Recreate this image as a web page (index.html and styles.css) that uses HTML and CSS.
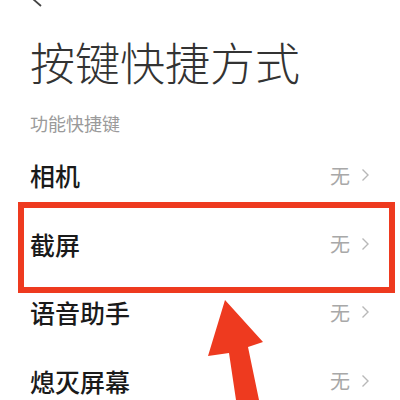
FILE: index.html
```html
<!DOCTYPE html>
<html lang="zh">
<head>
<meta charset="utf-8">
<link rel="stylesheet" href="styles.css">
</head>
<body>
<div class="page">
  <svg class="back" width="50" height="12" viewBox="0 0 50 12"><path d="M42 -9 L33 -1 L41 6" fill="none" stroke="#444" stroke-width="1.8"/></svg>
  <h1 class="title">按键快捷方式</h1>
  <div class="section">功能快捷键</div>
  <div class="list">
    <div class="row"><span class="label">相机</span><span class="value">无<svg class="chev" width="9" height="14" viewBox="0 0 9 14"><path d="M1.5 1.5 L7 7 L1.5 12.5" fill="none" stroke="#b8b8b8" stroke-width="1.4"/></svg></span></div>
    <div class="row"><span class="label">截屏</span><span class="value">无<svg class="chev" width="9" height="14" viewBox="0 0 9 14"><path d="M1.5 1.5 L7 7 L1.5 12.5" fill="none" stroke="#b8b8b8" stroke-width="1.4"/></svg></span></div>
    <div class="row"><span class="label">语音助手</span><span class="value">无<svg class="chev" width="9" height="14" viewBox="0 0 9 14"><path d="M1.5 1.5 L7 7 L1.5 12.5" fill="none" stroke="#b8b8b8" stroke-width="1.4"/></svg></span></div>
    <div class="row"><span class="label">熄灭屏幕</span><span class="value">无<svg class="chev" width="9" height="14" viewBox="0 0 9 14"><path d="M1.5 1.5 L7 7 L1.5 12.5" fill="none" stroke="#b8b8b8" stroke-width="1.4"/></svg></span></div>
  </div>
  <div class="highlight"></div>
  <svg class="arrow" width="400" height="400" viewBox="0 0 400 400"><polygon points="225,300 263,342 248,347 259,400 236,400 229,353 208,356" fill="#ee3a1f"/></svg>
</div>
</body>
</html>
```
FILE: styles.css
```css
html, body {
  margin: 0;
  padding: 0;
  background: #fff;
}
.page {
  position: relative;
  width: 400px;
  height: 400px;
  overflow: hidden;
  font-family: "Noto Sans CJK SC", "Noto Sans", sans-serif;
  padding: 0 30px;
  box-sizing: border-box;
}
.back {
  position: absolute;
  left: 0;
  top: 0;
}
.title {
  margin: 40px 0 0 0;
  height: 44px;
  line-height: 44px;
  font-size: 45px;
  font-weight: 300;
  color: #333;
  letter-spacing: 0;
}
.section {
  margin-top: 30px;
  height: 18px;
  line-height: 18px;
  font-size: 18px;
  color: #9a9a9a;
}
.list {
  margin-top: 9px;
  display: flex;
  flex-direction: column;
}
.row {
  height: 68.5px;
  display: flex;
  align-items: center;
  justify-content: space-between;
}
.label {
  font-size: 25px;
  font-weight: 500;
  color: #1a1a1a;
}
.value {
  display: flex;
  align-items: center;
  gap: 11px;
  font-size: 20px;
  color: #a8a8a8;
}
.chev {
  display: block;
}
.highlight {
  position: absolute;
  left: 18px;
  top: 202px;
  width: 377px;
  height: 91px;
  box-sizing: border-box;
  border: 6px solid #ee3a1f;
}
.arrow {
  position: absolute;
  left: 0;
  top: 0;
}
```
